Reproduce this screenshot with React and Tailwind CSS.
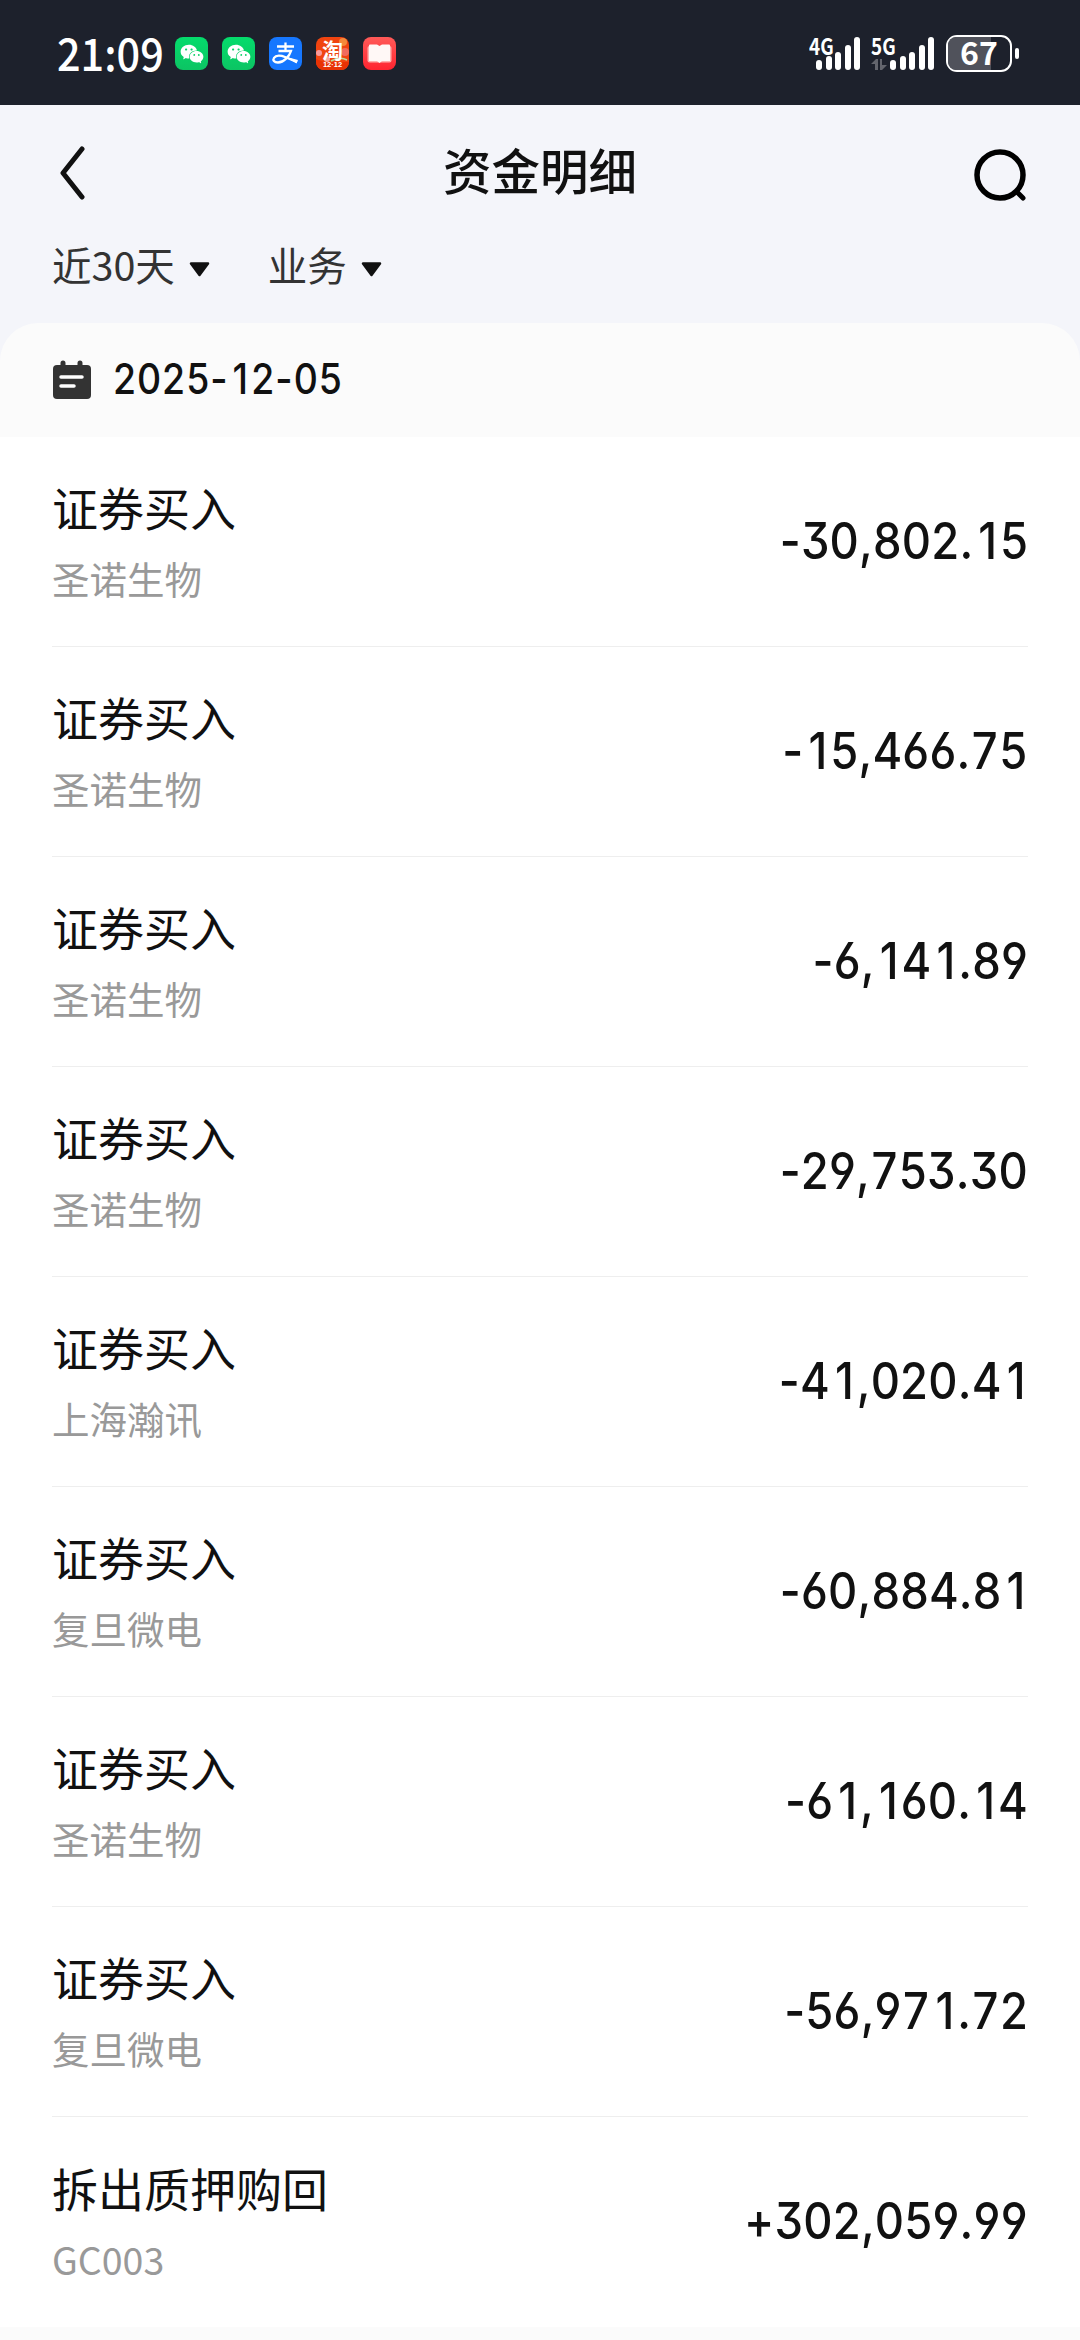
import { AiFillWechat } from 'react-icons/ai';

const CJK = "font-['Noto_Sans_CJK_SC',sans-serif]";
// flat-top three, open six and nine
const NUM = "font-['Inter','Noto_Sans_CJK_SC',sans-serif] [font-feature-settings:'kern'_0,'cv09','cv04','cv03']";

const RECORDS = [
  { type: '证券买入', name: '圣诺生物', amount: '-30,802.15' },
  { type: '证券买入', name: '圣诺生物', amount: '-15,466.75' },
  { type: '证券买入', name: '圣诺生物', amount: '-6,141.89' },
  { type: '证券买入', name: '圣诺生物', amount: '-29,753.30' },
  { type: '证券买入', name: '上海瀚讯', amount: '-41,020.41' },
  { type: '证券买入', name: '复旦微电', amount: '-60,884.81' },
  { type: '证券买入', name: '圣诺生物', amount: '-61,160.14' },
  { type: '证券买入', name: '复旦微电', amount: '-56,971.72' },
  { type: '拆出质押购回', name: 'GC003', amount: '+302,059.99' },
];

function WechatIcon() {
  return (
    <div className="flex size-[33px] items-center justify-center rounded-[8px] bg-linear-to-b from-[#04dc6c] to-[#0cc463]">
      <AiFillWechat className="size-[26px] text-white" />
    </div>
  );
}

function AlipayIcon() {
  return (
    <svg width="33" height="33" viewBox="0 0 33 33" fill="none">
      <rect width="33" height="33" rx="8" fill="#1677ff" />
      <path d="M8 9.5H25M16.5 5.5V14M9.5 14H22C20.5 19 15 25.5 9 25.5C5 25.5 3.5 23 5 20.8C7 18 12 18.3 16 20L28 25" stroke="#fff" strokeWidth="2.3" />
      <path d="M16 19.500L29 23L27.500 26.500Z" fill="#fff" />
    </svg>
  );
}

function TaobaoIcon() {
  return (
    <div className={`${CJK} relative flex size-[33px] flex-col items-center rounded-[8px] bg-[#f04410] text-white`}>
      <svg className="absolute inset-0 rounded-[8px]" width="33" height="33" viewBox="0 0 33 33">
        <circle cx="27" cy="5" r="4" fill="#f5893a" />
        <circle cx="3" cy="16" r="3" fill="#f79a9a" />
        <circle cx="29" cy="15" r="4" fill="#f06b5c" />
        <circle cx="11" cy="22" r="3" fill="#f7a8a0" />
        <path d="M0 22L8 25H33V33H0Z" fill="#e83204" />
        <path d="M15 24Q24 19 31 23" stroke="#b8dc9a" strokeWidth="1.5" fill="none" />
      </svg>
      <span className="relative mt-px text-[21px] font-bold leading-[22px]">淘</span>
      <span className="relative mt-px font-['Liberation_Sans',sans-serif] text-[7.500px] font-bold leading-[8px]">12·12</span>
    </div>
  );
}

function BookIcon() {
  return (
    <svg width="33" height="33" viewBox="0 0 33 33">
      <defs>
        <linearGradient id="book" x1="0" y1="0" x2="0" y2="1">
          <stop stopColor="#ff5a58" />
          <stop offset="1" stopColor="#ff2430" />
        </linearGradient>
      </defs>
      <rect width="33" height="33" rx="8" fill="url(#book)" />
      <rect x="4.5" y="9" width="24" height="16.5" rx="2" fill="#ffb0ae" />
      <path d="M6 8.5Q6 7.500 7 7.500H14L16.500 9L19 7.500H26Q27 7.500 27 8.500V24H19L16.500 26L14 24H6Z" fill="#fff8f6" />
    </svg>
  );
}

const BARS = [10, 14, 18, 25, 33];

function Signal({ label, arrows }) {
  return (
    <div className="relative h-[33px] w-[51px]">
      <span className="absolute left-0 top-0 origin-left scale-x-[0.82] font-['Noto_Sans_CJK_SC',sans-serif] text-[23px] font-bold leading-[17px] text-white">
        {label}
      </span>
      {arrows && (
        <svg className="absolute bottom-0 left-0" width="16" height="11" viewBox="0 0 16 11" fill="#63656d">
          <path d="M0 5L5 0H7V11H4V5Z" />
          <path d="M9 0H11V6H16L11 11H9Z" />
        </svg>
      )}
    </div>
  );
}

function SignalBars() {
  return (
    <div className="flex h-[33px] items-end gap-[3.500px]">
      {BARS.map((h) => (
        <div key={h} className="w-[6px] rounded-full bg-white" style={{ height: h }} />
      ))}
    </div>
  );
}

function StatusBar() {
  return (
    <div className="flex h-[105px] items-center bg-[#1d212c] pb-px pl-[57px] pr-[61px]">
      <span className={`${CJK} -mt-[2px] w-[118px] origin-left scale-x-[0.92] text-[45px] font-medium leading-none text-white`}>21:09</span>
      <div className="mt-[3px] flex gap-[14px]">
        <WechatIcon />
        <WechatIcon />
        <AlipayIcon />
        <TaobaoIcon />
        <BookIcon />
      </div>
      <div className="ml-auto mt-[3px] flex items-center">
        <Signal label="4G" />
        <div className="-ml-[44px] mr-[11px]">
          <SignalBars />
        </div>
        <Signal label="5G" arrows />
        <div className="-ml-[32px] mr-[12px]">
          <SignalBars />
        </div>
        <div className="relative flex h-[37px] w-[66px] items-center justify-center rounded-[11px] border-[2.500px] border-white">
          <div className="absolute inset-y-0 left-0 w-[43px] rounded-l-[8px] bg-[#50525b]" />
          <span className="relative -mt-[5px] font-['Noto_Sans_CJK_SC',sans-serif] text-[32px] font-bold leading-[32px] text-white">67</span>
        </div>
        <div className="ml-[3px] h-[11px] w-[4px] rounded-full bg-white" />
      </div>
    </div>
  );
}

function Filter({ label }) {
  return (
    <div className="flex items-center">
      <span className={`${CJK} -mt-[7px] text-[39.500px] leading-none text-[#333]`}>{label}</span>
      <svg className="ml-[14px] mt-[5px]" width="21" height="15" viewBox="0 0 21 15">
        <path d="M2 1.500H19L10.500 13Z" fill="#111" stroke="#111" strokeWidth="2.500" strokeLinejoin="round" />
      </svg>
    </div>
  );
}

function Header() {
  return (
    <div className="h-[218px] px-[52px]">
      <div className="flex h-[134px] items-center justify-between">
        <svg className="mt-[2px]" width="56" height="54" viewBox="0 0 56 54" fill="none">
          <path d="M30 3L11 27L30 51" stroke="#111" strokeWidth="5" strokeLinecap="round" strokeLinejoin="round" />
        </svg>
        <h1 className={`${CJK} -mt-[5px] text-[48.500px] font-medium leading-none text-[#111]`}>资金明细</h1>
        <svg className="mt-[6px]" width="56" height="56" viewBox="0 0 56 56" fill="none">
          <circle cx="28" cy="28" r="23" stroke="#000" strokeWidth="5.500" />
          <path d="M45 45L51 51" stroke="#000" strokeWidth="5" strokeLinecap="round" />
        </svg>
      </div>
      <div className="flex h-[56px] items-center gap-[58px]">
        <Filter label="近30天" />
        <Filter label="业务" />
      </div>
    </div>
  );
}

const DIGIT_PADDING = {
  1: 'pl-[0.11em] pr-[0.06em]',
  7: 'px-[0.03em]',
};

// pads the narrow "1" and "7" so that every digit takes the same room
function Digits({ value }) {
  return value.split(/([17])/).map((part, i) =>
    DIGIT_PADDING[part] ? (
      <span key={i} className={DIGIT_PADDING[part]}>
        {part}
      </span>
    ) : (
      part
    )
  );
}

function DateBar() {
  return (
    <div className="flex h-[114px] items-center rounded-t-[38px] bg-[#fbfbfb] px-[52px]">
      <svg width="40" height="40" viewBox="0 0 40 40">
        <rect x="1" y="5" width="38" height="34" rx="4" fill="#333" />
        <path d="M11 3V8M28 3V8" stroke="#333" strokeWidth="5" strokeLinecap="round" />
        <path d="M9 17H30M9 26H22" stroke="#fff" strokeWidth="3.500" strokeLinecap="round" />
      </svg>
      <span className={`${NUM} ml-[21px] origin-left -mt-[2px] scale-x-[0.88] tracking-[1.100px] text-[42.500px] font-medium leading-none text-[#111]`}>
        <Digits value="2025-12-05" />
      </span>
    </div>
  );
}

function Record({ type, name, amount, last }) {
  return (
    <div className={`mx-[52px] flex h-[210px] items-center justify-between ${last ? '' : 'border-b border-[#eee]'}`}>
      <div className={`${CJK} -mt-[6px]`}>
        <div className="text-[46px] leading-[68px] text-[#111]">{type}</div>
        <div className="mt-[11px] text-[37.500px] leading-[54px] text-[#999]">{name}</div>
      </div>
      <span className={`${NUM} -mt-[3px] origin-right scale-x-[0.89] tracking-[0.200px] text-[51px] font-medium leading-none text-[#111]`}>
        <Digits value={amount} />
      </span>
    </div>
  );
}

export default function App() {
  return (
    <div className="h-[2340px] w-[1080px] overflow-hidden bg-[#f4f5fa]">
      <StatusBar />
      <Header />
      <DateBar />
      <div className="bg-white">
        {RECORDS.map((record, i) => (
          <Record key={i} {...record} last={i === RECORDS.length - 1} />
        ))}
      </div>
      <div className="h-[13px] bg-[#fbfbfb]" />
    </div>
  );
}
